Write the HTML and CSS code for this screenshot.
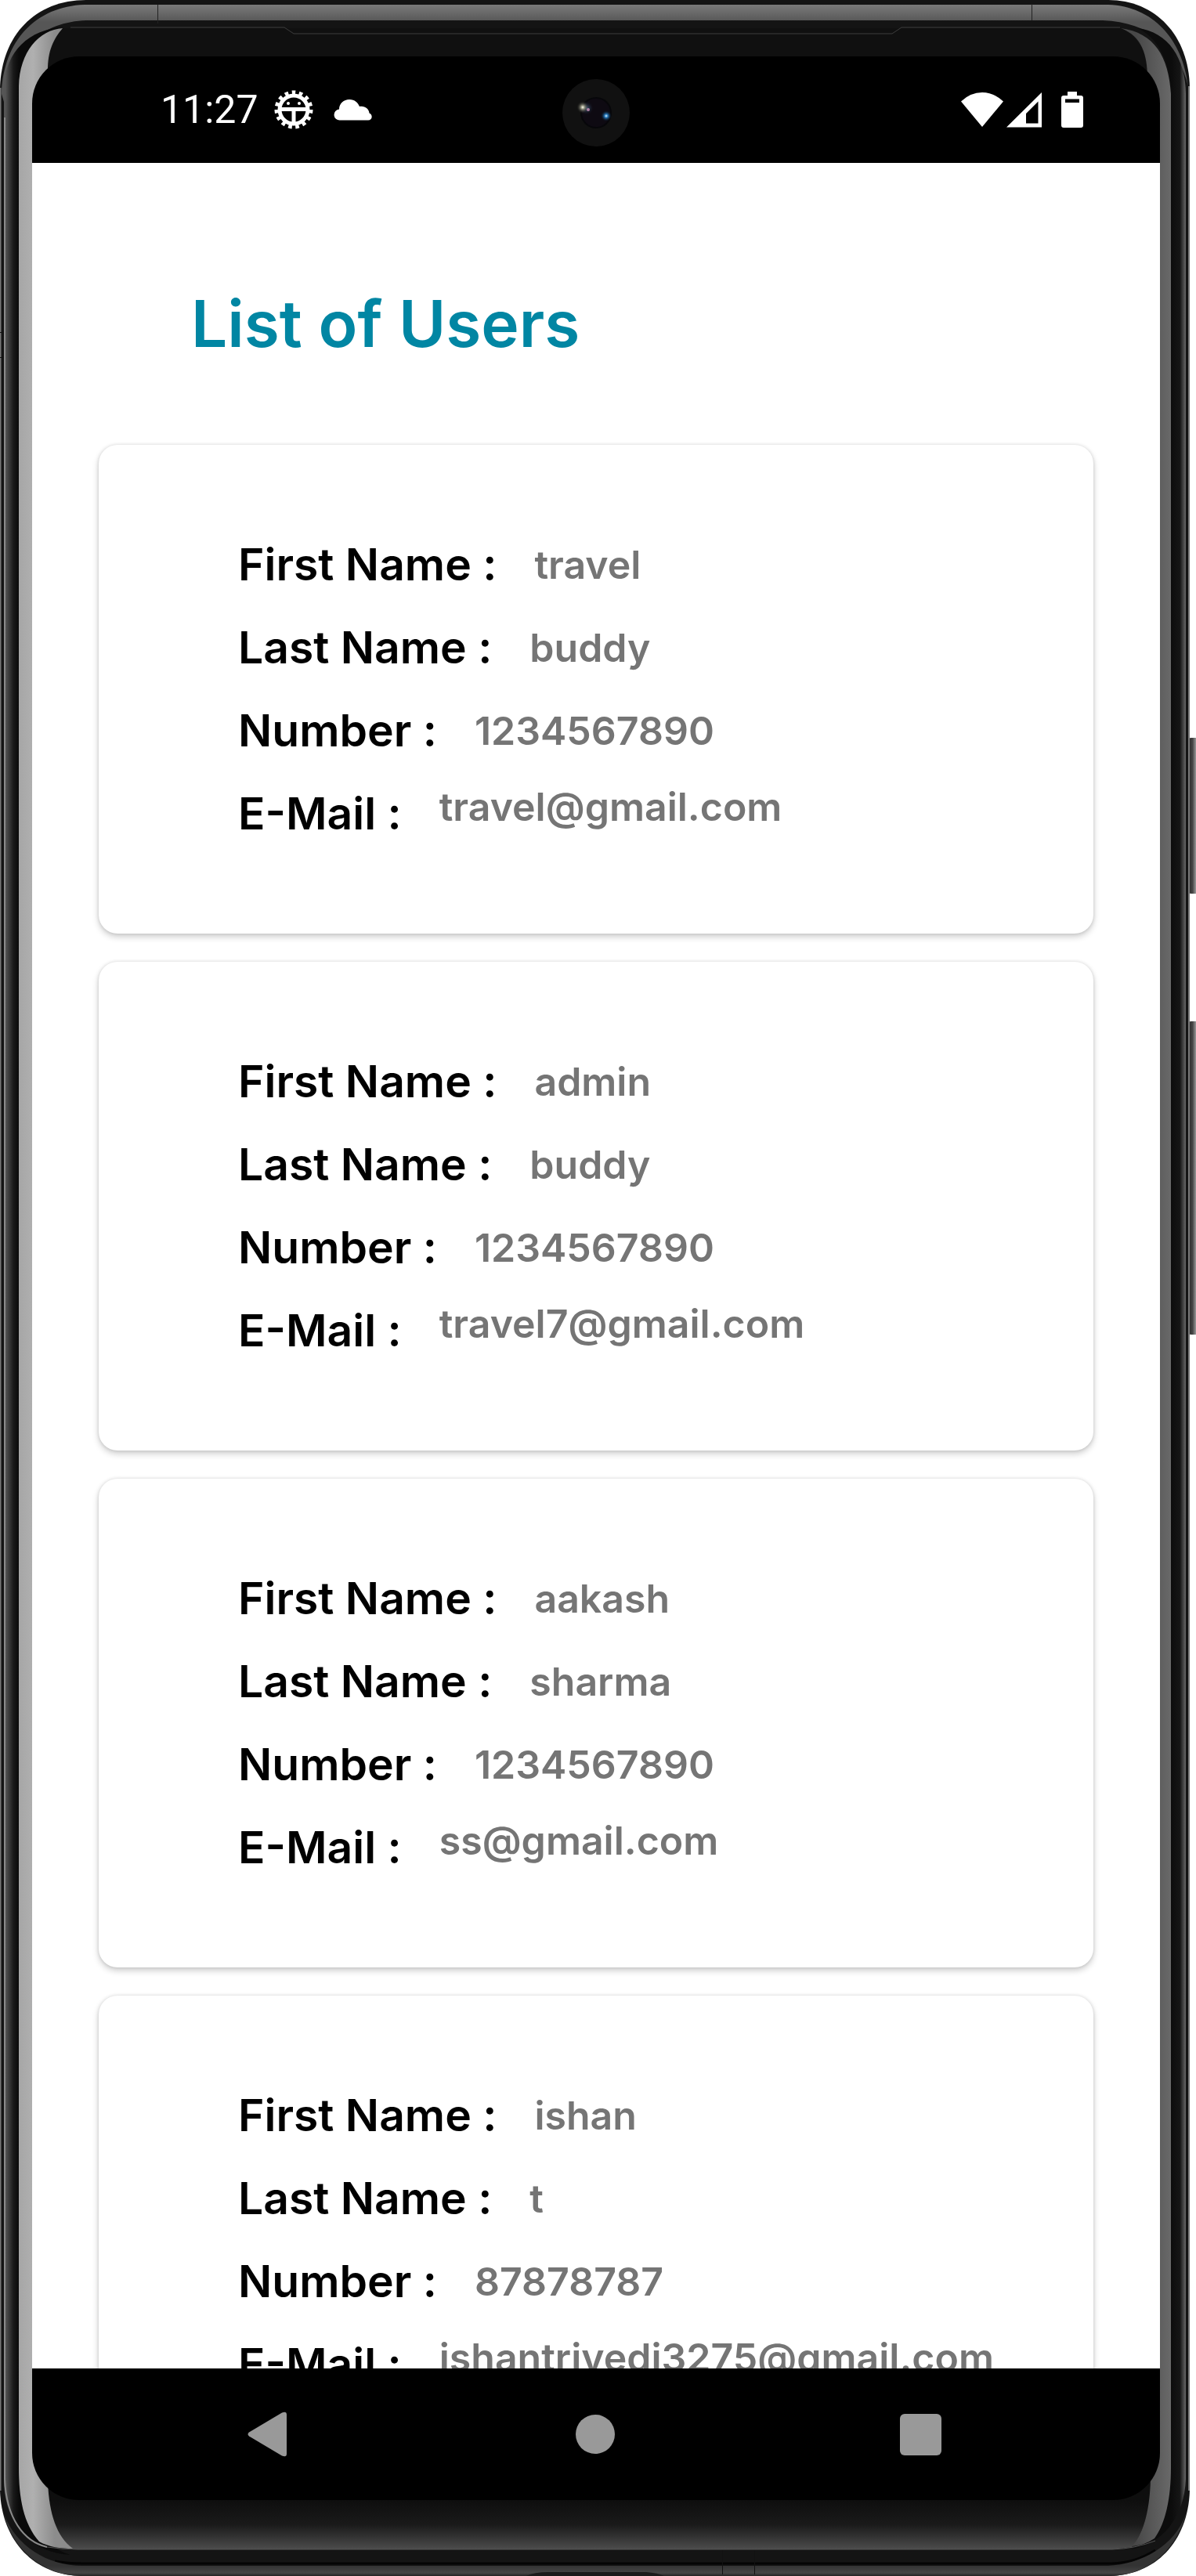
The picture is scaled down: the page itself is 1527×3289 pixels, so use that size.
FILE: index.html
```html
<!DOCTYPE html>
<html lang="en">
<head>
<meta charset="utf-8">
<meta name="viewport" content="width=device-width, initial-scale=1">
<title>List of Users</title>
<link rel="stylesheet" href="styles.css">
</head>
<body>
<div class="device">
  <svg class="frame" viewBox="0 0 1527 3289" preserveAspectRatio="none" aria-hidden="true">
    <defs>
      <linearGradient id="rim" x1="0" y1="6" x2="0" y2="28" gradientUnits="userSpaceOnUse"><stop offset="0" stop-color="#7a7a7a"/><stop offset="1" stop-color="#565656"/></linearGradient>
      <linearGradient id="leftBand" x1="7" y1="0" x2="24" y2="0" gradientUnits="userSpaceOnUse"><stop offset="0" stop-color="#555"/><stop offset=".6" stop-color="#191919"/><stop offset="1" stop-color="#0a0a0a"/></linearGradient>
      <linearGradient id="rightBand" x1="1495" y1="0" x2="1514" y2="0" gradientUnits="userSpaceOnUse"><stop offset="0" stop-color="#0c0c0c"/><stop offset=".6" stop-color="#151515"/><stop offset="1" stop-color="#686868"/></linearGradient>
      <linearGradient id="leftShine" x1="24" y1="0" x2="70" y2="0" gradientUnits="userSpaceOnUse"><stop offset="0" stop-color="#a6a6a6"/><stop offset=".4" stop-color="#b0b0b0"/><stop offset="1" stop-color="#8c8c8c"/></linearGradient>
      <linearGradient id="rightShine" x1="1450" y1="0" x2="1495" y2="0" gradientUnits="userSpaceOnUse"><stop offset="0" stop-color="#484848"/><stop offset="1" stop-color="#696969"/></linearGradient>
      <linearGradient id="chin" x1="0" y1="3192" x2="0" y2="3255" gradientUnits="userSpaceOnUse"><stop offset="0" stop-color="#0e0e0e"/><stop offset=".5" stop-color="#1a1a1a"/><stop offset="1" stop-color="#4c4c4c"/></linearGradient>
      <linearGradient id="lowRim" x1="0" y1="3276" x2="0" y2="3289" gradientUnits="userSpaceOnUse"><stop offset="0" stop-color="#333"/><stop offset=".7" stop-color="#454545"/><stop offset="1" stop-color="#222"/></linearGradient>
      <linearGradient id="key" x1="1518" y1="0" x2="1527" y2="0" gradientUnits="userSpaceOnUse"><stop offset="0" stop-color="#2b2b2b"/><stop offset=".5" stop-color="#444"/><stop offset="1" stop-color="#999"/></linearGradient>
    </defs>
    <rect x="1517" y="942" width="14" height="199" rx="4" fill="url(#key)"/>
    <rect x="1517" y="1304" width="14" height="400" rx="4" fill="url(#key)"/>
    <path d="M0 112C2 45 45 0 110 0H1415C1475 0 1518 45 1519 112V3180C1517 3245 1475 3289 1415 3289H105C45 3289 2 3245 0 3180Z" fill="#141414"/>
    <path d="M0 112V3180" stroke="#777" stroke-width="3"/>
    <path d="M2 120C4 52 46 8 108 6H1415C1472 8 1510 50 1517 110C1506 62 1468 28 1408 26H110C56 28 12 60 5 130Z" fill="url(#rim)"/>
    <path d="M201.500 6V30M1317.500 5V26" stroke="#222" stroke-width="1"/>
    <path d="M5 110V3170C7 3225 42 3260 90 3262C48 3248 26 3215 24 3150V120C26 70 48 42 82 34C36 38 8 65 5 110Z" fill="url(#leftBand)"/>
    <path d="M6 150V3165C8 3215 30 3245 60 3252" fill="none" stroke="#8a8a8a" stroke-width="2"/>
    <path d="M1495 120C1494 76 1476 46 1452 36C1492 40 1514 76 1514 120V3165C1512 3215 1484 3248 1444 3255C1480 3240 1494 3210 1495 3160Z" fill="url(#rightBand)"/>
    <path d="M1518 110V3180" stroke="#777" stroke-width="2"/>
    <path d="M62 90C62 66 70 48 80 36H1431C1456 48 1464 70 1465 92V3192H62Z" fill="#101010"/>
    <path d="M62 3170H1469C1468 3205 1460 3235 1445 3252L1420 3255H93C70 3235 62 3205 62 3170Z" fill="url(#chin)"/>
    <path d="M24 110C25 66 50 38 80 36C68 50 61 65 61 90V3170C63 3210 72 3238 93 3254C78 3254 62 3252 50 3245C30 3222 24 3190 24 3150Z" fill="url(#leftShine)"/>
    <path d="M1431 36C1458 46 1465 70 1465 100V3165H1469C1468 3210 1458 3238 1445 3251C1456 3250 1465 3247 1474 3241C1488 3222 1495 3190 1495 3150V120C1492 72 1474 42 1431 36Z" fill="url(#rightShine)"/>
    <path d="M90 35H363L375 43H1139L1151 35H1430" fill="none" stroke="#3d3d3d" stroke-width="1"/>
    <path d="M60 3252Q80 3255 100 3255H1420Q1450 3254 1475 3244" fill="none" stroke="#555" stroke-width="1"/>
    <path d="M70 3270Q85 3273 105 3273H1420Q1450 3272 1475 3256" fill="none" stroke="#050505" stroke-width="3"/>
    <path d="M5 3210C20 3250 60 3276 105 3276H1415C1458 3274 1500 3250 1514 3210C1500 3262 1460 3289 1415 3289H105C55 3289 16 3255 5 3210Z" fill="url(#lowRim)"/>
    <path d="M672 3289Q682 3284 700 3284H825Q840 3285 848 3289Z" fill="#1b1b1b"/>
    <path d="M922.500 3256V3287M963.500 3256V3287M0 424.500H4M0 456.500H4" stroke="#111" stroke-width="1"/>
  </svg>

  <main class="screen">
    <header class="status">
      <div class="status-group">
        <time class="clock">11:27</time>
        <svg class="icon-debug" viewBox="0 0 50 50" role="img" aria-label="Debugging">
          <circle cx="25" cy="25" r="18" fill="none" stroke="#fff" stroke-width="5"/>
          <circle cx="25" cy="25" r="22" fill="none" stroke="#fff" stroke-width="5" stroke-dasharray="4.600 4.616" pathLength="138.240"/>
          <path d="M9 24.500H41M25 24V42" stroke="#fff" stroke-width="5"/>
          <circle cx="18" cy="17" r="2" fill="#fff"/><circle cx="32" cy="17" r="2" fill="#fff"/>
        </svg>
        <svg class="icon-cloud" viewBox="0 0 50 28" role="img" aria-label="Cloud"><path d="M8 27.500A7 7 0 0 1 7 13.500C7 6 13 1 20 1C27 1 31 5 33 10C40 9 45 13 45.500 18.500C50 20 50 27.500 44 27.500Z" fill="#fff"/></svg>
      </div>
      <svg class="camera" viewBox="0 0 86 86" aria-hidden="true">
        <defs>
          <radialGradient id="glow"><stop offset="0" stop-color="#fffff0"/><stop offset=".25" stop-color="#a0a08c"/><stop offset="1" stop-color="#111" stop-opacity="0"/></radialGradient>
          <radialGradient id="blue"><stop offset="0" stop-color="#e0f4ff"/><stop offset=".3" stop-color="#287cc0"/><stop offset="1" stop-color="#06131e" stop-opacity="0"/></radialGradient>
          <radialGradient id="sheen"><stop offset="0" stop-color="#416183"/><stop offset="1" stop-color="#0c0a12" stop-opacity="0"/></radialGradient>
        </defs>
        <circle cx="43" cy="43" r="43" fill="#111"/>
        <circle cx="43" cy="43" r="20" fill="#07070a"/>
        <circle cx="43" cy="43" r="18" fill="#0e0a12"/>
        <circle cx="31" cy="37" r="9" fill="url(#sheen)"/>
        <circle cx="26" cy="36" r="8" fill="url(#glow)"/>
        <circle cx="33" cy="39" r="2" fill="#b07fa5"/>
        <circle cx="56" cy="47" r="7" fill="url(#blue)"/>
      </svg>
      <div class="status-group status-end">
        <svg class="icon-wifi" viewBox="0 0 54 46" role="img" aria-label="Wi-Fi"><path d="M0 12.500Q12 1 27 1T54 12.500L27 45Z" fill="#fff"/></svg>
        <svg class="icon-signal" viewBox="0 0 46 46" role="img" aria-label="Mobile signal"><path fill-rule="evenodd" d="M0 45.500L45 1V45.500ZM25 28V40.500H40.500V12.500Z" fill="#fff"/></svg>
        <svg class="icon-battery" viewBox="0 0 28 46" role="img" aria-label="Battery"><path fill-rule="evenodd" d="M8 0H20V5H25Q28 5 28 8V43Q28 46 25 46H3Q0 46 0 43V8Q0 5 3 5H8ZM5 9.500V14H23V9.500Z" fill="#fff"/></svg>
      </div>
    </header>

    <section class="content">
      <h1 class="title">List of Users</h1>
      <ul class="users">
        <li class="card">
          <dl class="fields">
            <div class="field"><dt>First Name :</dt><dd>travel</dd></div>
            <div class="field"><dt>Last Name :</dt><dd>buddy</dd></div>
            <div class="field"><dt>Number :</dt><dd>1234567890</dd></div>
            <div class="field field-mail"><dt>E-Mail :</dt><dd>travel@gmail.com</dd></div>
          </dl>
        </li>
        <li class="card">
          <dl class="fields">
            <div class="field"><dt>First Name :</dt><dd>admin</dd></div>
            <div class="field"><dt>Last Name :</dt><dd>buddy</dd></div>
            <div class="field"><dt>Number :</dt><dd>1234567890</dd></div>
            <div class="field field-mail"><dt>E-Mail :</dt><dd>travel7@gmail.com</dd></div>
          </dl>
        </li>
        <li class="card">
          <dl class="fields">
            <div class="field"><dt>First Name :</dt><dd>aakash</dd></div>
            <div class="field"><dt>Last Name :</dt><dd>sharma</dd></div>
            <div class="field"><dt>Number :</dt><dd>1234567890</dd></div>
            <div class="field field-mail"><dt>E-Mail :</dt><dd>ss@gmail.com</dd></div>
          </dl>
        </li>
        <li class="card">
          <dl class="fields">
            <div class="field"><dt>First Name :</dt><dd>ishan</dd></div>
            <div class="field"><dt>Last Name :</dt><dd>t</dd></div>
            <div class="field"><dt>Number :</dt><dd>87878787</dd></div>
            <div class="field field-mail"><dt>E-Mail :</dt><dd>ishantrivedi3275@gmail.com</dd></div>
          </dl>
        </li>
      </ul>
    </section>

    <nav class="navbar" aria-label="System">
      <button class="nav-button" type="button" aria-label="Back"><svg viewBox="0 0 60 60"><path d="M7 27.500L49 2.500Q55 0 55 5V55Q55 60 49 57.500L7 32.500Q4 30 7 27.500Z" fill="#999"/></svg></button>
      <button class="nav-button" type="button" aria-label="Home"><svg viewBox="0 0 60 60"><circle cx="31" cy="30" r="25" fill="#999"/></svg></button>
      <button class="nav-button" type="button" aria-label="Recent apps"><svg viewBox="0 0 60 60"><rect x="3" y="4" width="53" height="53" rx="6" fill="#999"/></svg></button>
    </nav>
  </main>
</div>
</body>
</html>
```
FILE: styles.css
```css
* {
  box-sizing: border-box;
}

body {
  margin: 0;
  background: #fff;
  font-family: Inter, "Open Sans", sans-serif;
}

.device {
  position: relative;
  display: flex;
  height: 100vh;
  padding: 72px 46px 97px 41px;
}

.frame {
  position: absolute;
  inset: 0;
  width: 100%;
  height: 100%;
}

.screen {
  position: relative;
  display: flex;
  flex: 1;
  flex-direction: column;
  min-width: 0;
  overflow: hidden;
  border-radius: 60px;
  background: #000;
}

.status {
  position: relative;
  display: flex;
  flex: none;
  align-items: center;
  justify-content: space-between;
  height: 136px;
  padding: 0 98px 0 164px;
}

.status-group {
  display: flex;
  align-items: center;
  gap: 20px;
}

.status-end {
  gap: 4px;
}

.clock {
  color: #fff;
  font: 400 50px/60px Roboto, sans-serif;
}

.icon-debug {
  width: 50px;
  height: 50px;
}

.icon-cloud {
  width: 50px;
  height: 28px;
  margin-left: 6px;
}

.icon-wifi {
  width: 54px;
  height: 46px;
}

.icon-signal {
  width: 46px;
  height: 46px;
}

.icon-battery {
  width: 28px;
  height: 46px;
  margin-left: 20px;
}

.camera {
  position: absolute;
  top: 29px;
  left: 50%;
  width: 86px;
  height: 86px;
  margin-left: -43px;
}

.content {
  flex: 1;
  min-height: 0;
  overflow: hidden;
  padding: 156px 85px 0;
  background: #fff;
}

.title {
  margin: 0;
  padding-left: 118px;
  color: #0186a3;
  font-size: 82px;
  font-weight: 600;
  line-height: 100px;
}

.users {
  display: flex;
  flex-direction: column;
  gap: 36px;
  margin: 104px 0 0;
  padding: 0;
  list-style: none;
}

.card {
  padding: 100px 40px 100px 178px;
  border-radius: 24px;
  background: #fff;
  box-shadow: 0 4px 8px rgba(0, 0, 0, 0.2), 0 0 4px rgba(0, 0, 0, 0.12);
}

.fields {
  margin: 0;
}

.field {
  display: flex;
  align-items: center;
  gap: 48px;
  height: 106px;
  line-height: 106px;
  white-space: nowrap;
}

.field dt {
  color: #000;
  font-size: 57px;
  font-weight: 600;
}

.field dd {
  margin: 0;
  color: #757575;
  font-size: 50px;
  font-weight: 600;
}

.field-mail {
  align-items: flex-start;
}

.field-mail dd {
  line-height: 88px;
}

.navbar {
  display: flex;
  flex: none;
  align-items: center;
  justify-content: space-between;
  height: 168px;
  padding: 0 275px 0 270px;
}

.nav-button {
  width: 60px;
  height: 60px;
  padding: 0;
  border: 0;
  background: none;
}

.nav-button svg {
  display: block;
}
```
